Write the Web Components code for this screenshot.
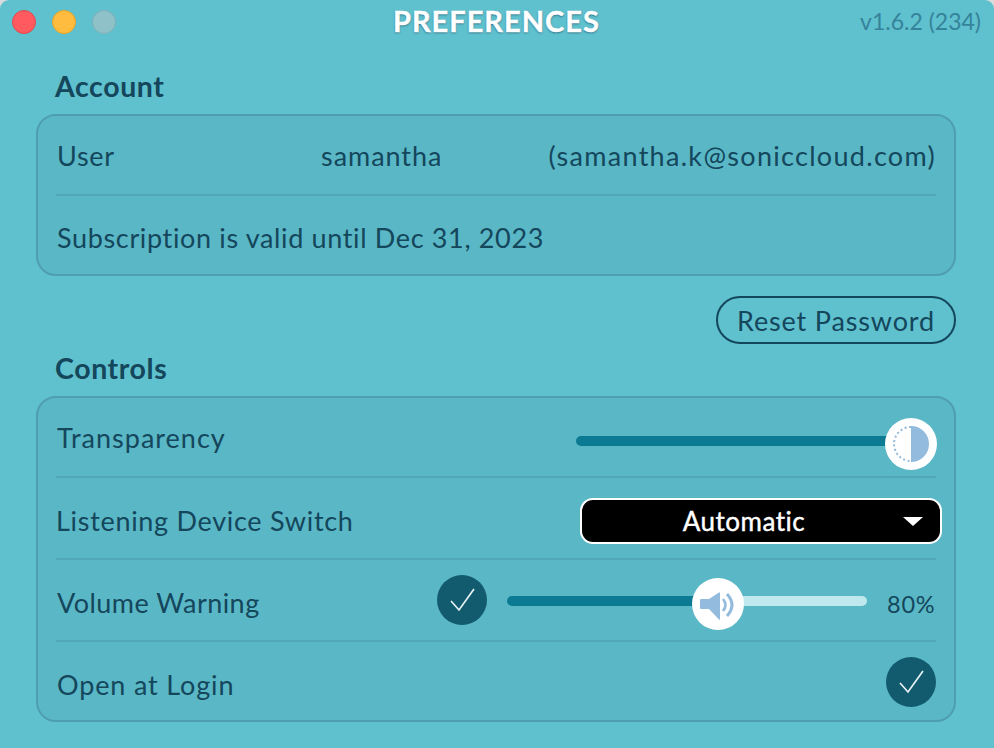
<!DOCTYPE html>
<html>
<head>
<meta charset="utf-8">
<title>Preferences</title>
<style>
  html, body { margin: 0; height: 100%; background: #d9dcdd; }
  body { font-family: "Lato", "Liberation Sans", sans-serif; color: #14465c; overflow: hidden; }
</style>
</head>
<body>
<app-window>
  <title-bar version="v1.6.2 (234)">PREFERENCES</title-bar>

  <pref-section heading="Account">
    <pref-row style="padding-top:0">
      <span style="width:264px">User</span>
      <span style="letter-spacing:0.95px">samantha</span>
      <span style="margin-left:auto;letter-spacing:1.3px">(samantha.k@soniccloud.com)</span>
    </pref-row>
    <pref-row style="letter-spacing:0.65px">Subscription is valid until Dec 31, 2023</pref-row>
  </pref-section>

  <pill-button>Reset Password</pill-button>

  <pref-section heading="Controls" class="controls">
    <pref-row style="padding-top:0;letter-spacing:1px">
      Transparency
      <pref-slider icon="contrast" value="335" style="margin-left:auto;margin-top:14px"></pref-slider>
    </pref-row>
    <pref-row style="padding-left:0">
      Listening Device Switch
      <pref-select style="margin-left:auto;margin-right:-6px;margin-top:2px">Automatic</pref-select>
    </pref-row>
    <pref-row style="letter-spacing:0.45px">
      Volume Warning
      <pref-check style="margin-left:auto;margin-bottom:4px"></pref-check>
      <pref-slider icon="speaker" value="211" style="margin-left:20px;margin-top:4px"></pref-slider>
      <span style="margin-left:20px;margin-right:2px;margin-top:4px;width:47px;font-size:23.5px;letter-spacing:0.8px">80%</span>
    </pref-row>
    <pref-row style="padding-top:6px;letter-spacing:0.85px">
      Open at Login
      <pref-check style="margin-left:auto;margin-bottom:4px"></pref-check>
    </pref-row>
  </pref-section>
</app-window>

<script>
// Small helper so every component is written the same way
function shadow(el, html) {
  el.attachShadow({ mode: 'open' });
  el.shadowRoot.innerHTML = html;
}

class AppWindow extends HTMLElement {
  constructor() {
    super();
    shadow(this, `
      <style>
        :host {
          display: flex;
          flex-direction: column;
          width: 994px;
          height: 748px;
          box-sizing: border-box;
          padding-bottom: 26px;
          background: #5fc0ce;
          border-radius: 9px 9px 0 0;
        }
      </style>
      <slot></slot>
    `);
  }
}

class TitleBar extends HTMLElement {
  constructor() {
    super();
    shadow(this, `
      <style>
        :host {
          display: flex;
          align-items: center;
          height: 44px;
          padding: 0 13px 0 12px;
        }
        .lights { display: flex; gap: 16px; width: 344px; flex: none; }
        .light { width: 22px; height: 22px; border-radius: 50%; border: 1px solid; }
        .close { background: #ff5a5f; border-color: #e2474f; }
        .min { background: #ffbc3e; border-color: #e8a427; }
        .zoom { background: #8fc1c9; border-color: #7fb0ba; }
        .title {
          flex: 1;
          padding: 0 0 3px 37px;
          font-size: 29px;
          font-weight: 700;
          letter-spacing: 1px;
          color: #fff;
          -webkit-text-stroke: 0.4px #fff;
          text-shadow: 0 1px 2px rgba(20, 70, 92, 0.7);
        }
        .version { padding-bottom: 3px; font-size: 23px; color: #35839a; }
      </style>
      <div class="lights">
        <div class="light close"></div>
        <div class="light min"></div>
        <div class="light zoom"></div>
      </div>
      <div class="title"><slot></slot></div>
      <div class="version">${this.getAttribute('version')}</div>
    `);
  }
}

class PrefSection extends HTMLElement {
  constructor() {
    super();
    shadow(this, `
      <style>
        :host { display: block; margin: 0 38px 0 36px; }
        :host(.controls) { margin-top: 5px; }
        h2 {
          margin: 23px 0 7px 19px;
          height: 40px;
          line-height: 38px;
          font-size: 28.5px;
          font-weight: 700;
          letter-spacing: 0.6px;
          color: #14465c;
        }
        :host(.controls) h2 { margin-top: 0; }
        .card {
          padding: 0 18px;
          border: 2px solid #4f9eaf;
          border-radius: 20px;
          background: #5ab7c5;
        }
      </style>
      <h2>${this.getAttribute('heading')}</h2>
      <div class="card"><slot></slot></div>
    `);
  }
}

class PrefRow extends HTMLElement {
  constructor() {
    super();
    shadow(this, `
      <style>
        :host {
          display: flex;
          align-items: center;
          height: 82px;
          box-sizing: border-box;
          padding: 4px 0 0 1px;
          border-top: 2px solid #52a8b8;
          font-size: 27px;
          letter-spacing: 0.7px;
          color: #14465c;
        }
        :host(:first-child) { height: 78px; border-top: 0; }
        :host(:last-child) { height: 80px; }
      </style>
      <slot></slot>
    `);
  }
}

class PillButton extends HTMLElement {
  constructor() {
    super();
    shadow(this, `
      <style>
        :host {
          display: flex;
          align-items: center;
          justify-content: center;
          align-self: flex-end;
          box-sizing: border-box;
          width: 240px;
          height: 48px;
          margin: 20px 38px 0 0;
          border: 2px solid #14465c;
          border-radius: 24px;
          font-size: 27px;
          letter-spacing: 0.85px;
          color: #14465c;
        }
      </style>
      <slot></slot>
    `);
  }
}

const THUMB_ICONS = {
  contrast: `
    <path d="M26 8A18 18 0 0 1 26 44Z" fill="#93bbdd"/>
    <path d="M26 9A17 17 0 0 0 26 43" fill="none" stroke="#93bbdd" stroke-width="2" stroke-dasharray="2 2.500"/>`,
  speaker: `
    <path d="M8 22Q8 21 9 21H17L27 14.500Q28 14 28 15V41Q28 42 27 41.500L17 31H9Q8 31 8 30Z" fill="#93bbdd"/>
    <path d="M31 21Q36 27 31 33" fill="none" stroke="#93bbdd" stroke-width="2.600"/>
    <path d="M35 16Q45 27 35 38" fill="none" stroke="#93bbdd" stroke-width="3"/>`
};

class PrefSlider extends HTMLElement {
  constructor() {
    super();
    const icon = THUMB_ICONS[this.getAttribute('icon')];
    const value = Number(this.getAttribute('value'));
    shadow(this, `
      <style>
        :host { display: block; position: relative; flex: none; width: 360px; height: 52px; }
        .track {
          height: 10px;
          margin-top: 18px;
          float: left;
          width: 100%;
          border-radius: 5px;
          background: linear-gradient(90deg, #0c7a92 ${value}px, #bfe9ef ${value}px);
        }
        .thumb {
          position: absolute;
          top: 0;
          left: ${value - 26}px;
          width: 52px;
          height: 52px;
          border-radius: 50%;
          background: #fff;
        }
        svg { display: block; }
      </style>
      <div class="track"></div>
      <div class="thumb"><svg width="52" height="52" viewBox="0 0 52 52">${icon}</svg></div>
    `);
  }
}

class PrefSelect extends HTMLElement {
  constructor() {
    super();
    shadow(this, `
      <style>
        :host {
          display: flex;
          align-items: center;
          justify-content: center;
          position: relative;
          flex: none;
          box-sizing: border-box;
          width: 362px;
          height: 46px;
          padding-right: 34px;
          border: 2px solid #fff;
          border-radius: 13px;
          background: #000;
          color: #fff;
          font-size: 26px;
          font-weight: 400;
          letter-spacing: 0.5px;
          -webkit-text-stroke: 0.4px #fff;
        }
        .caret {
          position: absolute;
          right: 17px;
          top: 17px;
          border-left: 10px solid transparent;
          border-right: 10px solid transparent;
          border-top: 9px solid #fff;
        }
      </style>
      <slot></slot>
      <div class="caret"></div>
    `);
  }
}

class PrefCheck extends HTMLElement {
  constructor() {
    super();
    shadow(this, `
      <style>
        :host { display: block; flex: none; width: 50px; height: 50px; }
        svg { display: block; }
      </style>
      <svg width="50" height="50" viewBox="0 0 50 50">
        <circle cx="25" cy="25" r="25" fill="#125a6e"/>
        <path d="M14 26L22 35L37 14" fill="none" stroke="#e6f2f3" stroke-width="1.700"/>
      </svg>
    `);
  }
}

customElements.define('app-window', AppWindow);
customElements.define('title-bar', TitleBar);
customElements.define('pref-section', PrefSection);
customElements.define('pref-row', PrefRow);
customElements.define('pill-button', PillButton);
customElements.define('pref-slider', PrefSlider);
customElements.define('pref-select', PrefSelect);
customElements.define('pref-check', PrefCheck);
</script>
</body>
</html>
